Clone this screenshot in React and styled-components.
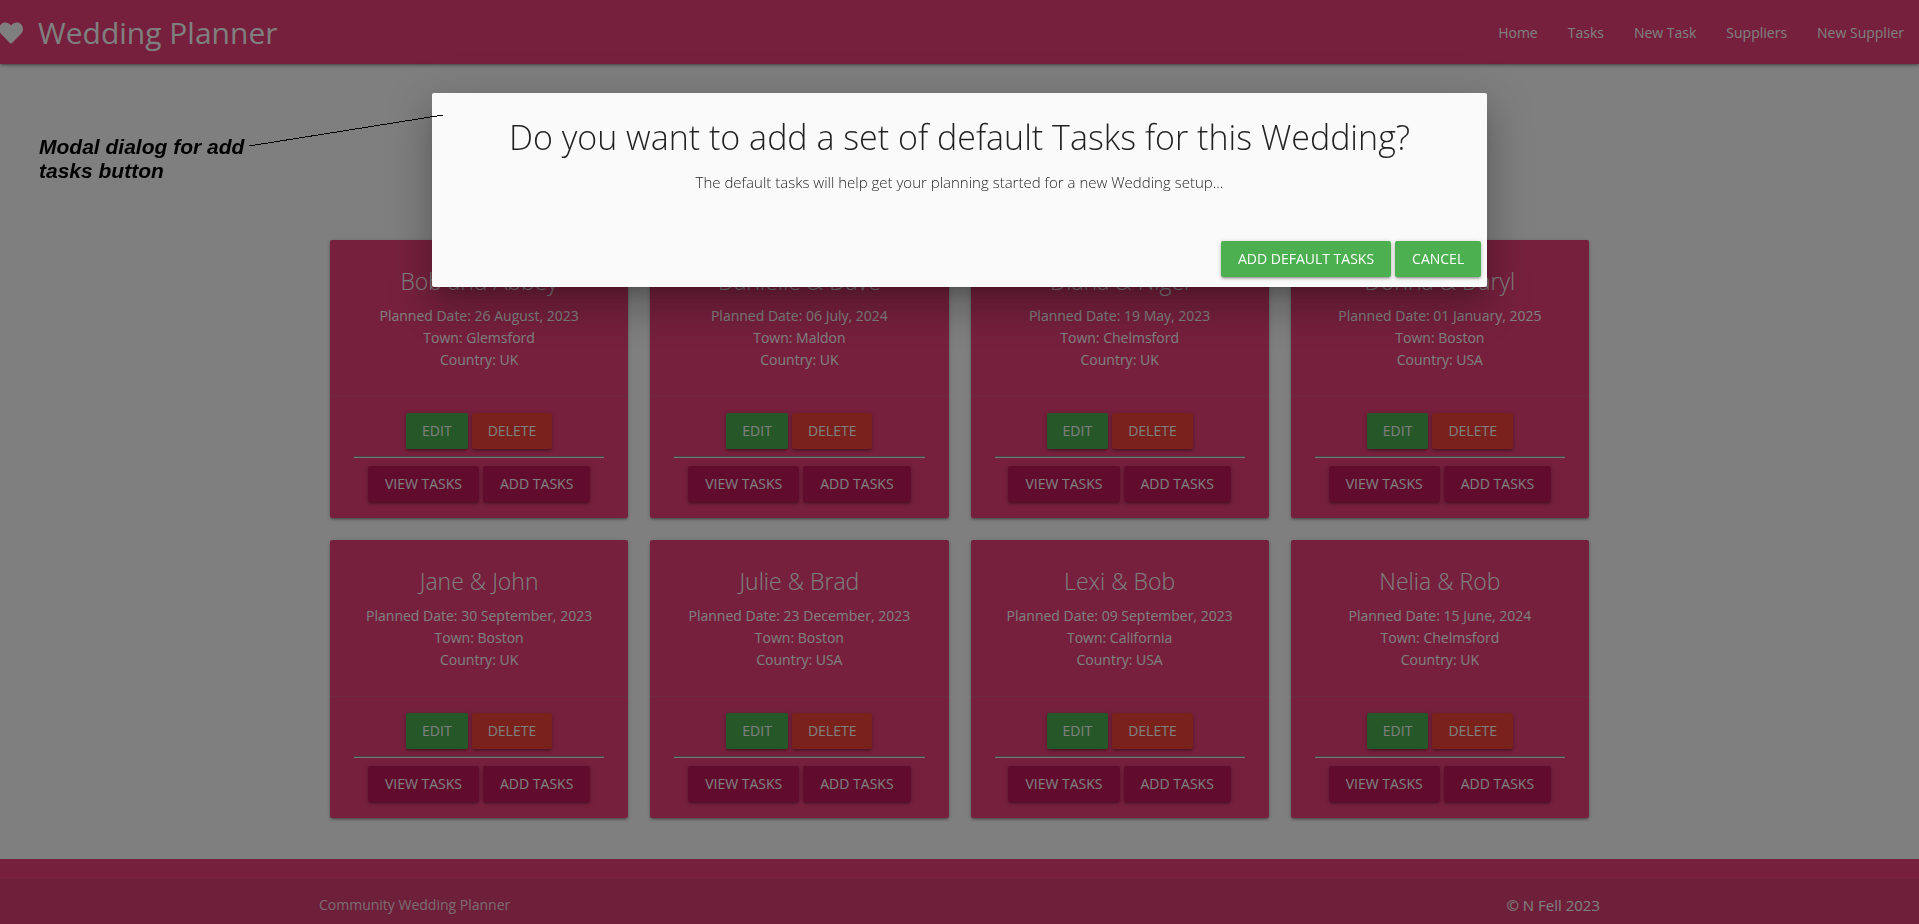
import React from 'react';
import styled, { createGlobalStyle } from 'styled-components';

const GlobalStyle = createGlobalStyle`
  *, *::before, *::after { box-sizing: border-box; }
  body {
    margin: 0;
    overflow: hidden;
    background: #fff;
    color: rgba(0, 0, 0, 0.87);
    font-family: "Open Sans", "Noto Sans", sans-serif;
    font-size: 14px;
    line-height: 22px;
  }
`;

const Page = styled.div`
  position: relative;
  display: flex;
  flex-direction: column;
  min-height: 100vh;
`;

const NavBar = styled.nav`
  display: flex;
  align-items: center;
  justify-content: space-between;
  height: 64px;
  padding-top: 2px;
  background: #ec407a;
  color: #fff;
  line-height: 62px;
  box-shadow: 0 2px 2px 0 rgba(0, 0, 0, 0.14), 0 3px 1px -2px rgba(0, 0, 0, 0.12),
    0 1px 5px 0 rgba(0, 0, 0, 0.2);
`;

const Brand = styled.a`
  display: flex;
  align-items: center;
  gap: 15px;
  margin-left: -1px;
  color: inherit;
  font-size: 30px;
  text-decoration: none;

  svg {
    width: 24px;
    height: 24px;
  }
`;

const NavLinks = styled.ul`
  display: flex;
  margin: 0;
  padding: 0;
  list-style: none;

  a {
    display: block;
    padding: 0 15px;
    color: inherit;
    text-decoration: none;
  }
`;

const Main = styled.main`
  flex: 1 0 auto;
  padding: 176px 0 41px;
`;

const Container = styled.div`
  width: 100%;
  max-width: 1281px;
  margin: 0 auto;
`;

const CardGrid = styled(Container)`
  display: grid;
  grid-template-columns: repeat(4, 1fr);
  gap: 22px;
  padding: 0 11px;
`;

const Card = styled.article`
  border-radius: 2px;
  background: #ec407a;
  color: #fff;
  text-align: center;
  box-shadow: 0 2px 2px 0 rgba(0, 0, 0, 0.14), 0 3px 1px -2px rgba(0, 0, 0, 0.12),
    0 1px 5px 0 rgba(0, 0, 0, 0.2);
`;

const CardContent = styled.div`
  padding: 24px 24px 25px;
`;

const CardTitle = styled.h2`
  margin: 0 0 7px;
  font-size: 23px;
  font-weight: 300;
  line-height: 34px;
`;

const CardLine = styled.p`
  margin: 0;
`;

const CardAction = styled.div`
  padding: 16px 24px;
  border-top: 1px solid rgba(160, 160, 160, 0.2);
`;

const ButtonRow = styled.div`
  display: flex;
  justify-content: ${(p) => p.$align || 'center'};
  gap: 4px;
`;

const Divider = styled.hr`
  margin: 7px 0 8px;
  border: 0;
  border-top: 1px solid #8a8a8a;
  border-bottom: 1px solid #eee;
`;

const tones = { green: '#4caf50', red: '#f44336', wine: '#c2185b' };

const Button = styled.button`
  height: 36px;
  padding: 0 ${(p) => (p.$wide ? 17 : 16)}px;
  border: 0;
  border-radius: 2px;
  background: ${(p) => tones[p.$tone]};
  color: #fff;
  font-family: inherit;
  font-size: 14px;
  font-weight: ${(p) => p.$weight || 400};
  line-height: 36px;
  text-transform: uppercase;
  white-space: nowrap;
  box-shadow: 0 2px 2px 0 rgba(0, 0, 0, 0.14), 0 3px 1px -2px rgba(0, 0, 0, 0.12),
    0 1px 5px 0 rgba(0, 0, 0, 0.2);
`;

const Footer = styled.footer`
  padding-top: 20px;
  background: #ec407a;
`;

const Copyright = styled.div`
  min-height: 50px;
  padding: 15px 0;
  background: rgba(51, 51, 51, 0.08);
  color: rgba(255, 255, 255, 0.8);
`;

const CopyrightRow = styled(Container)`
  display: flex;
  justify-content: space-between;
`;

const Owner = styled.span`
  color: #fff;
  font-size: 15px;
`;

const Overlay = styled.div`
  position: fixed;
  inset: 0;
  background: rgba(0, 0, 0, 0.5);
`;

const Modal = styled.div`
  position: fixed;
  top: 93px;
  left: 0;
  right: 0;
  width: 55%;
  margin: 0 auto;
  border-radius: 2px;
  background: #fafafa;
  box-shadow: 0 24px 38px 3px rgba(0, 0, 0, 0.14), 0 9px 46px 8px rgba(0, 0, 0, 0.12),
    0 11px 15px -7px rgba(0, 0, 0, 0.2);
`;

const ModalContent = styled.div`
  padding: 24px 24px 26px;
  text-align: center;
`;

const ModalTitle = styled.h1`
  margin: 0 0 14px;
  font-size: 34px;
  font-weight: 300;
  line-height: 40px;
`;

const ModalText = styled.p`
  margin: 0 0 12px;
  font-size: 15px;
  font-weight: 300;
`;

const ModalFooter = styled.div`
  padding: 10px 6px;
`;

const Note = styled.p`
  position: absolute;
  top: 135px;
  left: 39px;
  width: 230px;
  margin: 0;
  color: #000;
  font-family: "Liberation Sans", Arial, sans-serif;
  font-size: 21px;
  font-style: italic;
  font-weight: 700;
  line-height: 24px;
`;

const Pointer = styled.svg`
  position: absolute;
  top: 114px;
  left: 249px;
`;

const weddings = [
  ['Bob and Abbey', '26 August, 2023', 'Glemsford', 'UK'],
  ['Danielle & Dave', '06 July, 2024', 'Maldon', 'UK'],
  ['Diana & Nigel', '19 May, 2023', 'Chelmsford', 'UK'],
  ['Donna & Daryl', '01 January, 2025', 'Boston', 'USA'],
  ['Jane & John', '30 September, 2023', 'Boston', 'UK'],
  ['Julie & Brad', '23 December, 2023', 'Boston', 'USA'],
  ['Lexi & Bob', '09 September, 2023', 'California', 'USA'],
  ['Nelia & Rob', '15 June, 2024', 'Chelmsford', 'UK'],
];

const links = ['Home', 'Tasks', 'New Task', 'Suppliers', 'New Supplier'];

function WeddingCard({ names, date, town, country }) {
  return (
    <Card>
      <CardContent>
        <CardTitle>{names}</CardTitle>
        <CardLine>Planned Date: {date}</CardLine>
        <CardLine>Town: {town}</CardLine>
        <CardLine>Country: {country}</CardLine>
      </CardContent>
      <CardAction>
        <ButtonRow>
          <Button type="button" $tone="green">Edit</Button>
          <Button type="button" $tone="red">Delete</Button>
        </ButtonRow>
        <Divider />
        <ButtonRow>
          <Button type="button" $tone="wine" $wide>View Tasks</Button>
          <Button type="button" $tone="wine" $wide>Add Tasks</Button>
        </ButtonRow>
      </CardAction>
    </Card>
  );
}

export default function App() {
  return (
    <>
      <GlobalStyle />
      <Page>
        <NavBar>
          <Brand href="#home">
            <svg viewBox="0 0 512 512" fill="currentColor" aria-hidden="true">
              <path d="M462.3 62.6C407.5 15.9 326 24.3 275.7 76.2L256 96.5l-19.700-20.300C186.100 24.300 104.500 15.900 49.700 62.600c-62.800 53.600-66.100 149.800-9.900 207.900l193.500 199.800c12.500 12.900 32.800 12.900 45.300 0l193.500-199.800c56.300-58.100 53-154.300-9.800-207.900z" />
            </svg>
            Wedding Planner
          </Brand>
          <NavLinks>
            {links.map((label) => (
              <li key={label}>
                <a href="#nav">{label}</a>
              </li>
            ))}
          </NavLinks>
        </NavBar>
        <Main>
          <CardGrid>
            {weddings.map(([names, date, town, country]) => (
              <WeddingCard key={names} names={names} date={date} town={town} country={country} />
            ))}
          </CardGrid>
        </Main>
        <Footer>
          <Copyright>
            <CopyrightRow>
              <span>Community Wedding Planner</span>
              <Owner>© N Fell 2023</Owner>
            </CopyrightRow>
          </Copyright>
        </Footer>
      </Page>
      <Overlay />
      <Modal role="dialog" aria-modal="true" aria-labelledby="modal-title">
        <ModalContent>
          <ModalTitle id="modal-title">
            Do you want to add a set of default Tasks for this Wedding?
          </ModalTitle>
          <ModalText>
            The default tasks will help get your planning started for a new Wedding setup...
          </ModalText>
        </ModalContent>
        <ModalFooter>
          <ButtonRow $align="flex-end">
            <Button type="button" $tone="green" $weight={500} $wide>Add Default Tasks</Button>
            <Button type="button" $tone="green" $weight={500} $wide>Cancel</Button>
          </ButtonRow>
        </ModalFooter>
      </Modal>
      <Note>Modal dialog for add tasks button</Note>
      <Pointer width="194" height="33" viewBox="0 0 194 33" aria-hidden="true">
        <line x1="0" y1="32" x2="194" y2="1" stroke="#000" shapeRendering="crispEdges" />
      </Pointer>
    </>
  );
}
